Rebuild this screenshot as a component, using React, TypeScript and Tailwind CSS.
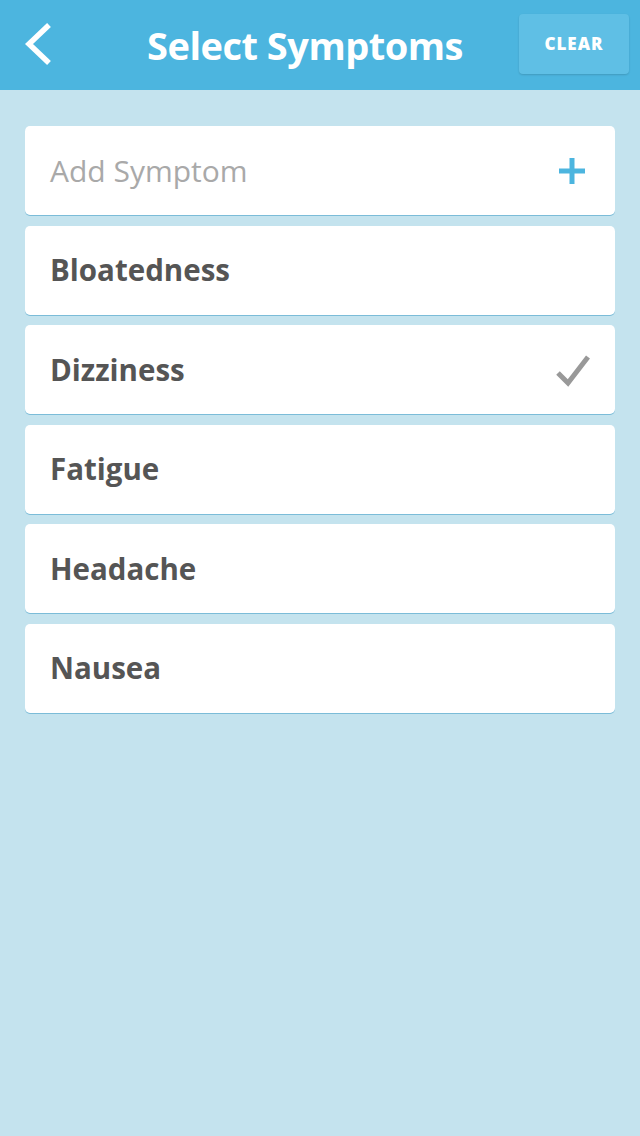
import type React from "react";

const symptoms = [
  { name: "Bloatedness", checked: false },
  { name: "Dizziness", checked: true },
  { name: "Fatigue", checked: false },
  { name: "Headache", checked: false },
  { name: "Nausea", checked: false },
];

const App: React.FC = () => {
  return (
    <div
      className="min-h-[1136px] w-[640px] bg-[#c4e3ee]"
      style={{ fontFamily: '"Open Sans", "Liberation Sans", sans-serif' }}
    >
      <header className="relative flex h-[90px] items-center justify-center bg-[#4cb5df] pr-[30px]">
        <button className="absolute left-[22px] top-[21px]">
          <svg width="32" height="46" viewBox="0 0 32 46">
            <path d="M27 4 L7 23 L27 42" fill="none" stroke="white" strokeWidth="5.5" />
          </svg>
        </button>
        <h1 className="text-[38px] font-bold tracking-[-0.5px] text-white">Select Symptoms</h1>
        <button className="absolute right-[11px] top-[14px] flex h-[60px] w-[110px] items-center justify-center rounded-[4px] bg-[#5fbfe5] text-[17px] font-extrabold tracking-[1px] text-white shadow-[0_1px_2px_rgba(0,0,0,0.15)]">
          CLEAR
        </button>
      </header>

      <div className="flex flex-col gap-[10.6px] px-[25px] pt-[36px]">
        <div className="flex h-[89px] items-center justify-between rounded-[5px] bg-white pl-[25px] pr-[28px] shadow-[0_1px_0_#7bbcd8]">
          <span className="text-[30px] text-[#a9a9a9]">Add Symptom</span>
          <svg width="30" height="30" viewBox="0 0 30 30">
            <path d="M15 2 V28 M2 15 H28" stroke="#4cb5df" strokeWidth="5" />
          </svg>
        </div>
        {symptoms.map((s) => (
          <div
            key={s.name}
            className="flex h-[89px] items-center justify-between rounded-[5px] bg-white pl-[25px] pr-[24px] shadow-[0_1px_0_#7bbcd8]"
          >
            <span className="text-[29.5px] font-bold text-[#555555]">{s.name}</span>
            {s.checked && (
              <svg width="36" height="34" viewBox="0 0 36 34">
                <path d="M3 20 L13 30 L33 4" fill="none" stroke="#999999" strokeWidth="5" />
              </svg>
            )}
          </div>
        ))}
      </div>
    </div>
  );
};

export default App;
